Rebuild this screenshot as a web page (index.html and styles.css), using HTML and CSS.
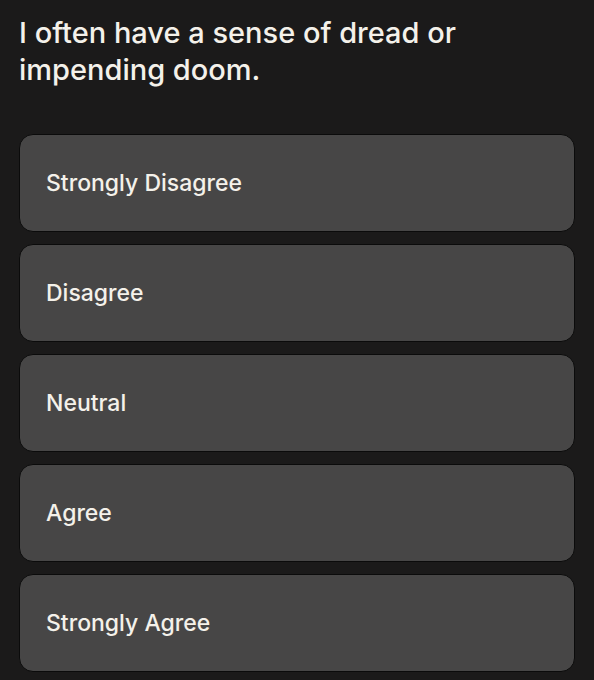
FILE: index.html
```html
<!DOCTYPE html>
<html lang="en">
<head>
    <meta charset="UTF-8">
    <meta name="viewport" content="width=device-width, initial-scale=1.0">
    <title>Question</title>
    <link rel="stylesheet" href="styles.css">
</head>
<body>
    <div class="question">
        <h1>I often have a sense of dread or impending doom.</h1>

        <div class="options">
            <div class="option">Strongly Disagree</div>
            <div class="option">Disagree</div>
            <div class="option">Neutral</div>
            <div class="option">Agree</div>
            <div class="option">Strongly Agree</div>
        </div>
    </div>
</body>
</html>
```

FILE: styles.css
```css
body {
    margin: 0;
    background-color: #1b1a1a;
    font-family: Inter, 'Noto Sans', sans-serif;
    color: #f4f1ea;
}
.question {
    padding: 14px 19px 0;
}
h1 {
    margin: 0 0 46px;
    font-size: 29px;
    line-height: 37px;
    font-weight: 500;
}
.options {
    display: flex;
    flex-direction: column;
    gap: 12px;
}
.option {
    height: 96px;
    display: flex;
    align-items: center;
    padding: 0 26px;
    background: #474646;
    border: 1px solid #0b0b0b;
    border-radius: 14px;
    font-size: 23px;
    font-weight: 500;
}
```
